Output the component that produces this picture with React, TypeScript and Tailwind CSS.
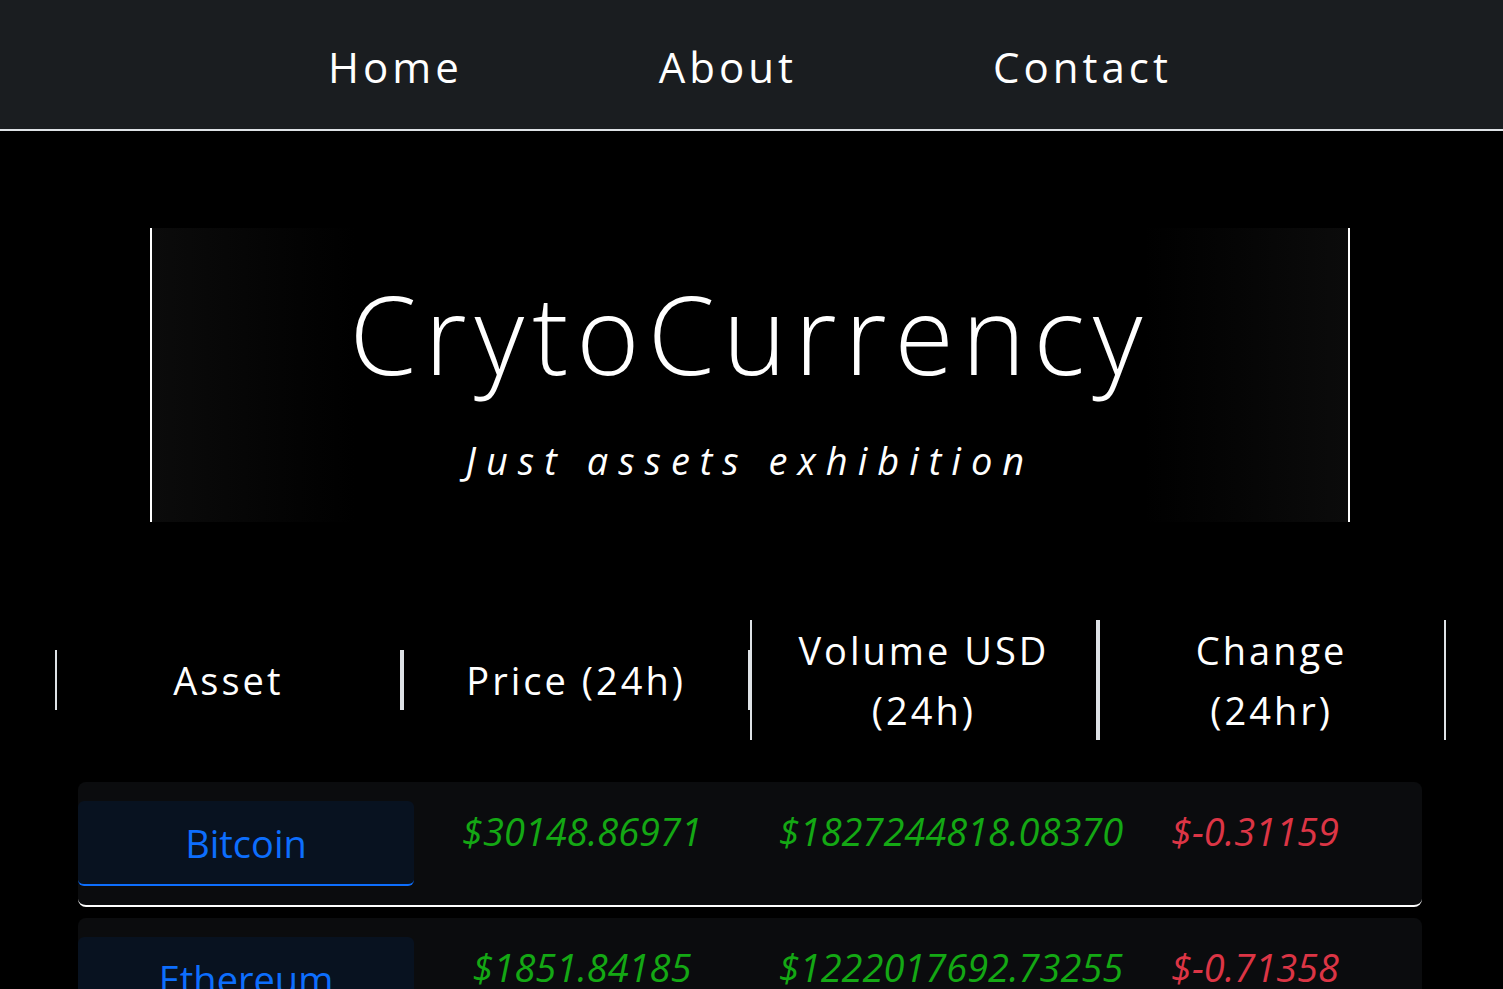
import React from "react"

const assets = [
  {
    name: "Bitcoin",
    price: "$30148.86971",
    volume: "$1827244818.08370",
    change: "$-0.31159",
  },
  {
    name: "Ethereum",
    price: "$1851.84185",
    volume: "$1222017692.73255",
    change: "$-0.71358",
  },
  {
    name: "Tether",
    price: "$1.00021",
    volume: "$2451887012.11873",
    change: "$0.01204",
  },
]

export default function App() {
  return (
    <div className="min-h-screen bg-black text-white font-['Open_Sans','Noto_Sans',sans-serif] overflow-hidden">
      <nav className="h-[131px] bg-[#1a1d20] border-b-2 border-[#dee2e6]">
        <div className="w-[1500px] h-full flex items-center justify-center gap-[196px] pt-1">
          <a className="text-[42px] tracking-[4px] text-white">Home</a>
          <a className="text-[42px] tracking-[4px] text-white">About</a>
          <a className="text-[42px] tracking-[4px] text-white">Contact</a>
        </div>
      </nav>

      <main className="w-[1500px]">
        <header className="mx-auto mt-[97px] w-[1200px] h-[294px] border-x-2 border-white bg-[linear-gradient(to_right,#0b0b0b,#000_17%,#000_83%,#0b0b0b)] flex flex-col items-center">
          <h1 className="mt-[36px] text-[108px] font-light leading-[1.3] tracking-[8px]">
            CrytoCurrency
          </h1>
          <p className="mt-[28px] text-[38px] italic tracking-[10px]">
            Just assets exhibition
          </p>
        </header>

        <div className="mx-auto mt-[98px] w-[1391px] grid grid-cols-4 items-center text-[38px] tracking-[3px] leading-[60px] text-center">
          <div className="border-x-2 border-[#dee2e6]">Asset</div>
          <div className="border-x-2 border-[#dee2e6]">Price (24h)</div>
          <div className="border-x-2 border-[#dee2e6]">
            Volume USD
            <br />
            (24h)
          </div>
          <div className="border-x-2 border-[#dee2e6]">
            Change
            <br />
            (24hr)
          </div>
        </div>

        <div className="mx-auto mt-[42px] w-[1344px] flex flex-col gap-[11px]">
          {assets.map((a) => (
            <div
              key={a.name}
              className="bg-[#0b0c0e] rounded-lg border-b-2 border-white py-[19px] grid grid-cols-[336px_336px_402px_206px] items-start text-[38px] leading-[60px]"
            >
              <button className="h-[85px] bg-[#081220] rounded-md border-b-2 border-[#0d6efd] text-[#0d6efd]">
                {a.name}
              </button>
              <span className="text-center italic text-[#14a814]">{a.price}</span>
              <span className="text-center italic text-[#14a814] whitespace-nowrap">
                {a.volume}
              </span>
              <span
                className={`text-center italic ${
                  a.change.startsWith("$-") ? "text-[#dc3545]" : "text-[#14a814]"
                }`}
              >
                {a.change}
              </span>
            </div>
          ))}
        </div>
      </main>
    </div>
  )
}
